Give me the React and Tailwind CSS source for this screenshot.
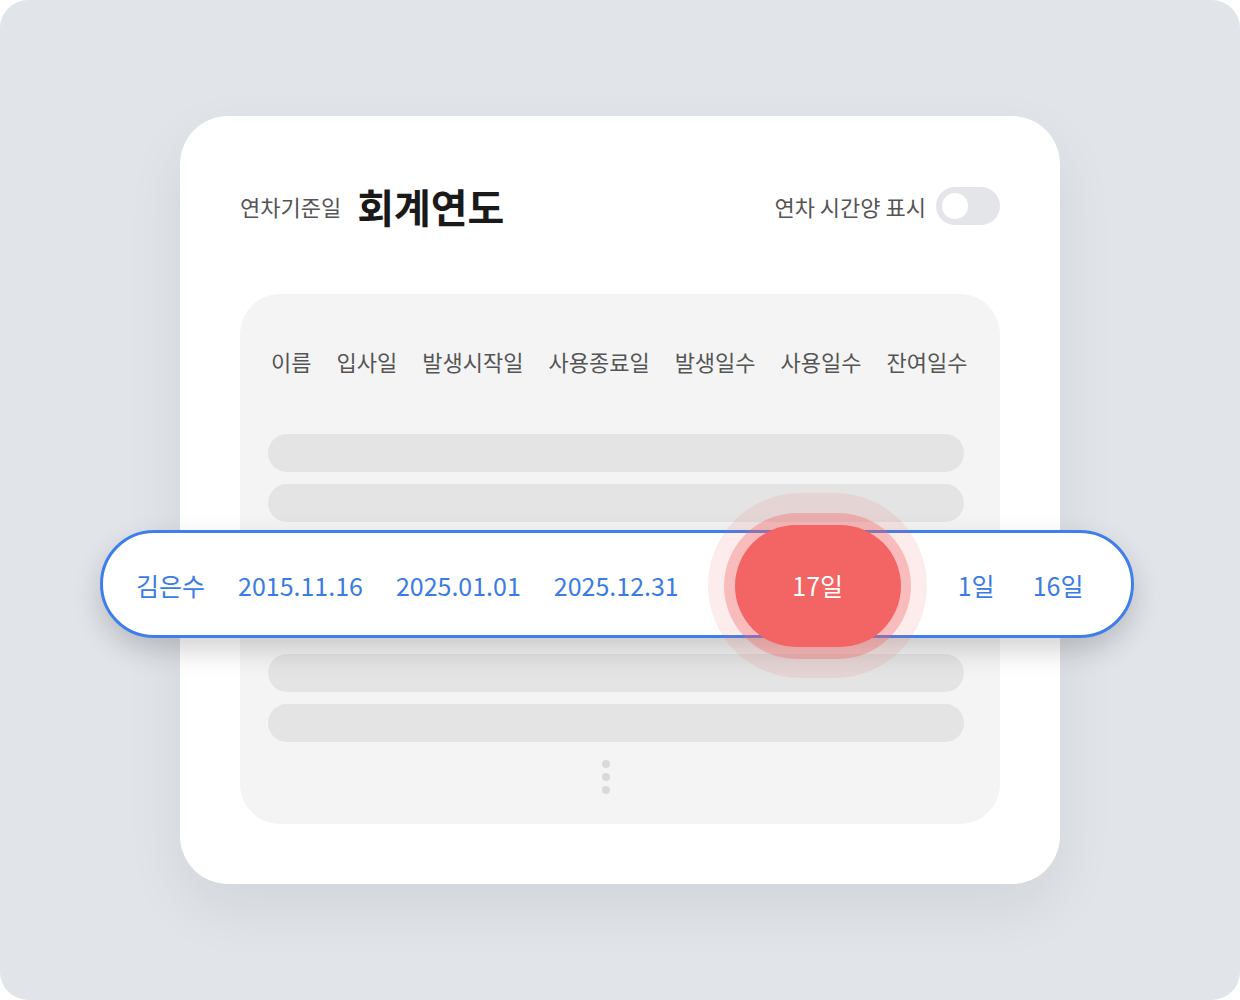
import React from 'react';

const columns = ['이름', '입사일', '발생시작일', '사용종료일', '발생일수', '사용일수', '잔여일수'];

function Bar() {
  return <div className="h-[38px] rounded-full bg-[#e4e4e4]" />;
}

export default function App() {
  return (
    <div className="w-[1240px] h-[1000px] bg-white" style={{ fontFamily: '"Noto Sans CJK KR", "Noto Sans", sans-serif' }}>
      <div className="w-full h-full rounded-[28px] bg-[#e1e4e9] pt-[116px] overflow-hidden">
        <div className="mx-auto w-[880px] rounded-[48px] bg-white px-[60px] pt-[64px] pb-[60px] shadow-[0_24px_60px_rgba(0,0,0,0.07)]">
          {/* header */}
          <div className="flex h-[52px] items-center justify-between">
            <div className="flex items-center">
              <span className="text-[22px] text-[#555]">연차기준일</span>
              <span className="ml-[16px] text-[40px] font-bold leading-none text-[#1a1a1a]">회계연도</span>
            </div>
            <div className="flex items-center">
              <span className="text-[22px] text-[#555]">연차 시간양 표시</span>
              <div className="ml-[10px] flex h-[38px] w-[64px] items-center rounded-full bg-[#e3e5e8] pl-[6px]">
                <div className="h-[26px] w-[26px] rounded-full bg-white" />
              </div>
            </div>
          </div>

          {/* table panel */}
          <div className="mt-[62px] rounded-[40px] bg-[#f4f4f4] pt-[53px] pb-[30px]">
            <div className="flex h-[28px] gap-[25px] whitespace-nowrap pl-[31px] text-[22px] leading-[28px] text-[#555]">
              {columns.map((c) => (
                <span key={c} className="shrink-0">{c}</span>
              ))}
            </div>

            <div className="mt-[59px] pl-[28px] pr-[36px]">
              <Bar />
              <div className="mt-[12px]">
                <Bar />
              </div>

              {/* highlighted row */}
              <div className="relative mt-[8px] -ml-[168px] -mr-[170px] flex h-[108px] items-center whitespace-nowrap rounded-full border-[3px] border-[#3f7fea] bg-white pl-[33px] pt-[4px] text-[25px] text-[#3b7be6] shadow-[0_12px_28px_rgba(0,0,0,0.18)]">
                <span>김은수</span>
                <span className="ml-[33px]">2015.11.16</span>
                <span className="ml-[33px]">2025.01.01</span>
                <span className="ml-[33px]">2025.12.31</span>
                <div className="relative ml-[56px] flex h-[122px] w-[166px] shrink-0 items-center justify-center">
                  <div className="absolute left-[-27px] top-[-32px] h-[185px] w-[219px] rounded-full bg-[rgba(242,100,100,0.12)]" />
                  <div className="absolute left-[-11px] top-[-12px] h-[146px] w-[187px] rounded-full bg-[rgba(242,100,100,0.35)]" />
                  <div className="relative flex h-[122px] w-[166px] items-center justify-center rounded-full bg-[#f36464] text-white">
                    17일
                  </div>
                </div>
                <span className="ml-[57px]">1일</span>
                <span className="ml-[38px]">16일</span>
              </div>

              <div className="mt-[16px]">
                <Bar />
              </div>
              <div className="mt-[12px]">
                <Bar />
              </div>

              <div className="mt-[18px] ml-[334px] flex w-[8px] flex-col gap-[5px]">
                <div className="h-[8px] w-[8px] rounded-full bg-[#d9d9d9]" />
                <div className="h-[8px] w-[8px] rounded-full bg-[#d9d9d9]" />
                <div className="h-[8px] w-[8px] rounded-full bg-[#d9d9d9]" />
              </div>
            </div>
          </div>
        </div>
      </div>
    </div>
  );
}
